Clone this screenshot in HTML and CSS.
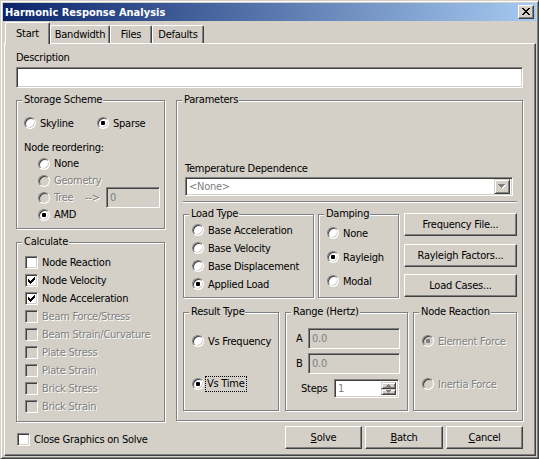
FILE: index.html
```html
<!DOCTYPE html>
<html lang="en">

<head>
    <meta charset="UTF-8">
    <title>Harmonic Response Analysis</title>
    <link rel="stylesheet" href="styles.css">
</head>

<body>
    <div class="window">
        <div class="titlebar">
            <span class="title">Harmonic Response Analysis</span>
            <span class="close-btn">
                <svg width="8" height="7" viewBox="0 0 8 7" shape-rendering="crispEdges">
                    <path d="M0 0h2v1H0z M6 0h2v1H6z M1 1h2v1H1z M5 1h2v1H5z M2 2h4v1H2z M3 3h2v1H3z M2 4h4v1H2z M1 5h2v1H1z M5 5h2v1H5z M0 6h2v1H0z M6 6h2v1H6z" fill="#000"/>
                </svg>
            </span>
        </div>

        <div class="tabs">
            <div class="tab tab-start active">Start</div>
            <div class="tab tab-bandwidth">Bandwidth</div>
            <div class="tab tab-files">Files</div>
            <div class="tab tab-defaults">Defaults</div>
        </div>

        <div class="page">
            <div class="field-label">Description</div>
            <div class="textbox description"></div>

            <div class="columns">
                <div class="left-col">
                    <!-- Storage scheme -->
                    <div class="group storage">
                        <span class="legend">Storage Scheme</span>
                        <div class="scheme-row">
                            <div class="opt skyline"><span class="radio"></span>Skyline</div>
                            <div class="opt"><span class="radio checked"></span>Sparse</div>
                        </div>
                        <div class="sub-label">Node reordering:</div>
                        <div class="reorder">
                            <div class="opt"><span class="radio"></span>None</div>
                            <div class="opt disabled"><span class="radio"></span>Geometry</div>
                            <div class="tree-row">
                                <div class="opt disabled tree"><span class="radio"></span>Tree</div>
                                <span class="arrow disabled">--&gt;</span>
                                <div class="textbox inactive tree-input">0</div>
                            </div>
                            <div class="opt"><span class="radio checked"></span>AMD</div>
                        </div>
                    </div>

                    <!-- Calculate -->
                    <div class="group calculate">
                        <span class="legend">Calculate</span>
                        <div class="opt check-row"><span class="check"></span>Node Reaction</div>
                        <div class="opt check-row"><span class="check"><svg width="7" height="7" viewBox="0 0 7 7" shape-rendering="crispEdges"><path d="M0 2h1v1h1v1h1v-1h1v-1h1v-1h1v-1h1v3h-1v1h-1v1h-1v1h-1v1h-1v-1h-1v-1h-1z" fill="#000"/></svg></span>Node Velocity</div>
                        <div class="opt check-row"><span class="check"><svg width="7" height="7" viewBox="0 0 7 7" shape-rendering="crispEdges"><path d="M0 2h1v1h1v1h1v-1h1v-1h1v-1h1v-1h1v3h-1v1h-1v1h-1v1h-1v1h-1v-1h-1v-1h-1z" fill="#000"/></svg></span>Node Acceleration</div>
                        <div class="opt check-row disabled"><span class="check"></span>Beam Force/Stress</div>
                        <div class="opt check-row disabled"><span class="check"></span>Beam Strain/Curvature</div>
                        <div class="opt check-row disabled"><span class="check"></span>Plate Stress</div>
                        <div class="opt check-row disabled"><span class="check"></span>Plate Strain</div>
                        <div class="opt check-row disabled"><span class="check"></span>Brick Stress</div>
                        <div class="opt check-row disabled"><span class="check"></span>Brick Strain</div>
                    </div>
                </div>

                <!-- Parameters -->
                <div class="group params">
                    <span class="legend">Parameters</span>

                    <div class="temp">
                        <div class="field-label">Temperature Dependence</div>
                        <div class="textbox combo">
                            <span class="combo-text">&lt;None&gt;</span>
                            <span class="combo-btn">
                                <svg width="8" height="5" viewBox="0 0 8 5" shape-rendering="crispEdges">
                                    <path d="M1 1h7v1H1z M2 2h5v1H2z M3 3h3v1H3z M4 4h1v1H4z" fill="#fff"/>
                                    <path d="M0 0h7v1H0z M1 1h5v1H1z M2 2h3v1H2z M3 3h1v1H3z" fill="#808080"/>
                                </svg>
                            </span>
                        </div>
                    </div>

                    <div class="separator"></div>

                    <div class="param-row top-row">
                        <div class="group load-type">
                            <span class="legend">Load Type</span>
                            <div class="opt"><span class="radio"></span>Base Acceleration</div>
                            <div class="opt"><span class="radio"></span>Base Velocity</div>
                            <div class="opt"><span class="radio"></span>Base Displacement</div>
                            <div class="opt"><span class="radio checked"></span>Applied Load</div>
                        </div>

                        <div class="group damping">
                            <span class="legend">Damping</span>
                            <div class="opt"><span class="radio"></span>None</div>
                            <div class="opt"><span class="radio checked"></span>Rayleigh</div>
                            <div class="opt"><span class="radio"></span>Modal</div>
                        </div>

                        <div class="side-buttons">
                            <div class="btn">Frequency File...</div>
                            <div class="btn">Rayleigh Factors...</div>
                            <div class="btn">Load Cases...</div>
                        </div>
                    </div>

                    <div class="param-row bottom-row">
                        <div class="group result-type">
                            <span class="legend">Result Type</span>
                            <div class="opt"><span class="radio"></span>Vs Frequency</div>
                            <div class="opt"><span class="radio checked"></span><span class="focus">Vs Time</span></div>
                        </div>

                        <div class="group range">
                            <span class="legend">Range (Hertz)</span>
                            <div class="range-row">
                                <span class="range-label">A</span>
                                <div class="textbox inactive range-input">0.0</div>
                            </div>
                            <div class="range-row">
                                <span class="range-label">B</span>
                                <div class="textbox inactive range-input">0.0</div>
                            </div>
                            <div class="range-row steps-row">
                                <span class="steps-label">Steps</span>
                                <div class="textbox spinner">
                                    <span class="spinner-text">1</span>
                                    <span class="spin-btns">
                                        <span class="spin-btn">
                                            <svg width="5" height="3" viewBox="0 0 5 3" shape-rendering="crispEdges"><path d="M2 0h1v1H2z M1 1h3v1H1z M0 2h5v1H0z" fill="#808080"/></svg>
                                        </span>
                                        <span class="spin-btn">
                                            <svg width="5" height="3" viewBox="0 0 5 3" shape-rendering="crispEdges"><path d="M0 0h5v1H0z M1 1h3v1H1z M2 2h1v1H2z" fill="#808080"/></svg>
                                        </span>
                                    </span>
                                </div>
                            </div>
                        </div>

                        <div class="group node-reaction">
                            <span class="legend">Node Reaction</span>
                            <div class="opt disabled"><span class="radio checked"></span>Element Force</div>
                            <div class="opt disabled"><span class="radio"></span>Inertia Force</div>
                        </div>
                    </div>
                </div>
            </div>

            <div class="footer">
                <div class="opt footer-check"><span class="check"></span>Close Graphics on Solve</div>
                <div class="footer-buttons">
                    <div class="btn btn-solve"><u>S</u>olve</div>
                    <div class="btn btn-batch"><u>B</u>atch</div>
                    <div class="btn btn-cancel"><u>C</u>ancel</div>
                </div>
            </div>
        </div>
    </div>
</body>

</html>
```

FILE: styles.css
```css
* {
    box-sizing: border-box;
}

body {
    margin: 0;
    background-color: #d4d0c8;
    font-family: "DejaVu Sans Condensed", "Liberation Sans", sans-serif;
    font-size: 11px;
    letter-spacing: -0.25px;
    color: #000;
}

/* window frame */
.window {
    width: 539px;
    height: 459px;
    padding: 2px;
    border: 1px solid;
    border-color: #d4d0c8 #404040 #404040 #d4d0c8;
    box-shadow: inset 1px 1px #fff, inset -1px -1px #808080;
}

.titlebar {
    display: flex;
    align-items: center;
    justify-content: space-between;
    height: 18px;
    padding: 0 2px;
    background: linear-gradient(to right, #0a246a, #a6caf0);
    color: #fff;
    font-weight: bold;
    letter-spacing: 0;
}

.close-btn {
    display: flex;
    align-items: center;
    justify-content: center;
    width: 16px;
    height: 14px;
    padding: 0 1px 1px 0;
    background-color: #d4d0c8;
    border: 1px solid;
    border-color: #fff #404040 #404040 #fff;
    box-shadow: inset -1px -1px #808080;
}

/* tabs */
.tabs {
    display: flex;
    align-items: flex-end;
    height: 22px;
    padding-left: 2px;
}

.tab {
    display: flex;
    align-items: center;
    justify-content: center;
    height: 18px;
    border: 1px solid;
    border-bottom: none;
    border-color: #fff #404040 #404040 #fff;
    border-radius: 2px 2px 0 0;
    box-shadow: inset -1px 0 #808080;
    background-color: #d4d0c8;
}

.tab.active {
    position: relative;
    z-index: 1;
    height: 22px;
    margin-bottom: -1px;
    padding-bottom: 1px;
}

.tab-start { width: 45px; }
.tab-bandwidth { width: 60px; }
.tab-files { width: 42px; }
.tab-defaults { width: 52px; }

.page {
    width: 532px;
    height: 413px;
    margin-left: 1px;
    padding: 7px 12px 0 11px;
    border: 1px solid;
    border-color: #fff #404040 #404040 #fff;
    box-shadow: inset -1px -1px #808080;
}

.field-label {
    line-height: 13px;
}

/* sunken edit box */
.textbox {
    border: 1px solid;
    border-color: #808080 #fff #fff #808080;
    box-shadow: inset 1px 1px #404040, inset -1px -1px #d4d0c8;
    background-color: #fff;
}

.textbox.inactive {
    display: flex;
    align-items: center;
    padding-left: 3px;
    background-color: #d4d0c8;
    color: #808080;
}

.description {
    height: 21px;
    margin-top: 3px;
}

.columns {
    display: flex;
    align-items: flex-start;
    gap: 11px;
    margin-top: 12px;
}

.left-col {
    display: flex;
    flex-direction: column;
    gap: 13px;
    width: 149px;
}

/* etched group box */
.group {
    position: relative;
    border: 1px solid #808080;
    box-shadow: inset 1px 1px #fff, 1px 1px #fff;
}

.legend {
    position: absolute;
    top: -8px;
    left: 5px;
    padding: 0 1px 0 2px;
    line-height: 13px;
    background-color: #d4d0c8;
}

/* radio / check options */
.opt {
    display: flex;
    align-items: center;
    height: 18px;
    white-space: nowrap;
}

.radio {
    position: relative;
    flex-shrink: 0;
    width: 12px;
    height: 12px;
    margin-right: 4px;
    border: 1px solid;
    border-color: #808080 #fff #fff #808080;
    border-radius: 50%;
    box-shadow: inset 1px 1px #404040, inset -1px -1px #d4d0c8;
    background-color: #fff;
}

.radio.checked::after {
    content: "";
    position: absolute;
    top: 3px;
    left: 3px;
    width: 4px;
    height: 4px;
    border-radius: 1px;
    background-color: #000;
}

.check {
    display: flex;
    align-items: center;
    justify-content: center;
    flex-shrink: 0;
    width: 13px;
    height: 13px;
    margin-right: 4px;
    border: 1px solid;
    border-color: #808080 #fff #fff #808080;
    box-shadow: inset 1px 1px #404040, inset -1px -1px #d4d0c8;
    background-color: #fff;
}

.disabled {
    color: #808080;
    text-shadow: 1px 1px #fff;
}

.disabled .radio,
.disabled .check {
    background-color: #d4d0c8;
}

.disabled .radio.checked::after {
    background-color: #808080;
}

/* storage scheme */
.storage {
    height: 129px;
    padding: 13px 0 0 7px;
}

.scheme-row {
    display: flex;
}

.skyline {
    width: 73px;
}

.sub-label {
    margin-top: 9px;
    line-height: 14px;
}

.reorder {
    margin-left: 14px;
}

.reorder .opt {
    height: 17px;
}

.tree-row {
    display: flex;
    align-items: center;
    height: 17px;
}

.reorder .tree {
    width: 47px;
}

.arrow {
    width: 21px;
}

.tree-input {
    width: 54px;
    height: 21px;
    flex-shrink: 0;
}

/* calculate */
.calculate {
    height: 180px;
    padding: 10px 0 0 8px;
}

/* parameters */
.params {
    width: 347px;
    height: 321px;
    padding: 61px 5px 0 6px;
}

.temp {
    padding: 0 4px 0 2px;
}

.combo {
    display: flex;
    align-items: center;
    height: 19px;
    margin-top: 2px;
    padding: 2px 2px 2px 3px;
}

.combo-text {
    flex: 1;
    color: #808080;
}

.combo-btn {
    display: flex;
    align-items: center;
    justify-content: center;
    width: 16px;
    height: 15px;
    border: 1px solid;
    border-color: #d4d0c8 #404040 #404040 #d4d0c8;
    box-shadow: inset 1px 1px #fff, inset -1px -1px #808080;
    background-color: #d4d0c8;
}

.separator {
    height: 2px;
    margin-top: 5px;
    border-top: 1px solid #808080;
    border-bottom: 1px solid #fff;
}

.param-row {
    display: flex;
    align-items: flex-start;
}

.top-row {
    height: 85px;
    margin-top: 10px;
}

.load-type {
    width: 131px;
    height: 84px;
    margin-top: 1px;
    padding: 6px 0 0 8px;
}

.damping {
    display: flex;
    flex-direction: column;
    gap: 6px;
    width: 81px;
    height: 84px;
    margin: 1px 0 0 4px;
    padding: 9px 0 0 8px;
}

.side-buttons {
    display: flex;
    flex-direction: column;
    justify-content: space-between;
    width: 113px;
    height: 84px;
    margin-left: 5px;
}

.btn {
    display: flex;
    align-items: center;
    justify-content: center;
    height: 23px;
    border: 1px solid;
    border-color: #fff #404040 #404040 #fff;
    box-shadow: inset -1px -1px #808080;
    background-color: #d4d0c8;
}

.bottom-row {
    margin-top: 14px;
}

.result-type,
.node-reaction {
    display: flex;
    flex-direction: column;
    gap: 25px;
    height: 99px;
    padding: 19px 0 0 8px;
}

.result-type {
    width: 96px;
}

.node-reaction {
    width: 104px;
    margin-left: 5px;
}

.focus {
    padding: 0 1px;
    margin-left: -2px;
    line-height: 14px;
    outline: 1px dotted #000;
}

.range {
    width: 123px;
    height: 99px;
    margin-left: 6px;
    padding: 15px 0 0 10px;
}

.range-row {
    display: flex;
    align-items: center;
    height: 21px;
}

.range-row + .range-row {
    margin-top: 4px;
}

.range-label {
    width: 12px;
}

.range-input {
    width: 92px;
    height: 21px;
}

.range .steps-row {
    height: 19px;
    margin-top: 5px;
}

.steps-label {
    width: 33px;
    margin-left: 5px;
}

.spinner {
    display: flex;
    align-items: stretch;
    width: 65px;
    height: 19px;
    padding: 2px 2px 2px 3px;
}

.spinner-text {
    flex: 1;
    align-self: center;
    color: #808080;
}

.spin-btns {
    display: flex;
    flex-direction: column;
    width: 15px;
}

.spin-btn {
    display: flex;
    align-items: center;
    justify-content: center;
    flex: 1;
    border: 1px solid;
    border-color: #d4d0c8 #404040 #404040 #d4d0c8;
    box-shadow: inset 1px 1px #fff, inset -1px -1px #808080;
    background-color: #d4d0c8;
}

/* footer */
.footer {
    display: flex;
    align-items: center;
    height: 23px;
    margin-top: 4px;
}

.footer-check {
    margin: 3px 0 0 1px;
}

.footer-buttons {
    display: flex;
    gap: 3px;
    margin-left: auto;
}

.btn-solve,
.btn-cancel {
    width: 77px;
}

.btn-batch {
    width: 78px;
}
```
